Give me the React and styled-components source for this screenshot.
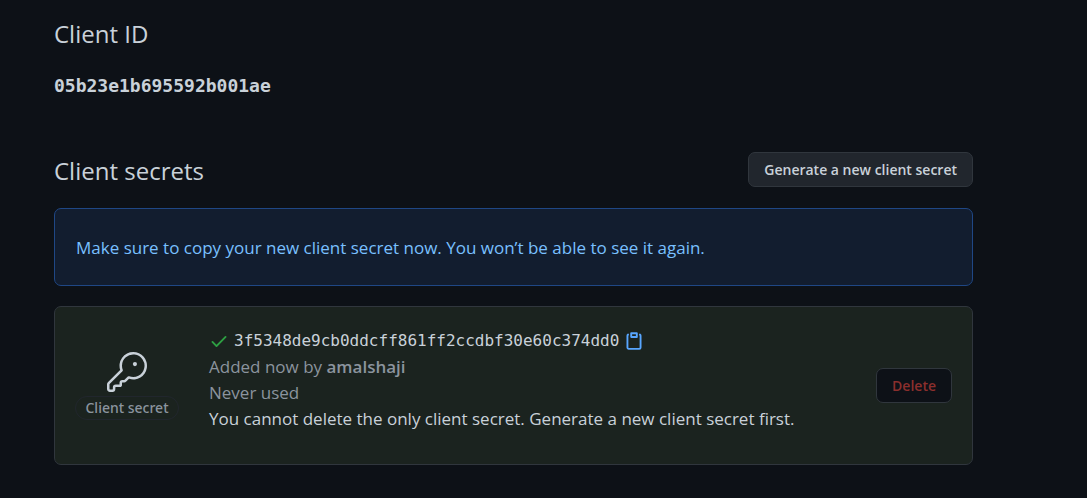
import React from 'react';
import styled, { createGlobalStyle } from 'styled-components';

const sans = '"Open Sans", "Noto Sans", sans-serif';
const label = '"Noto Sans", "Open Sans", sans-serif';
const mono = '"DejaVu Sans Mono", "Liberation Mono", monospace';

const GlobalStyle = createGlobalStyle`
  *, *::before, *::after { box-sizing: border-box; }
  body {
    margin: 0;
    background: #0d1117;
    color: #c9d1d9;
    font-family: ${sans};
    font-size: 17px;
    line-height: 26px;
  }
`;

const Page = styled.main`
  padding: 15px 114px 33px 54px;
`;

const Heading = styled.h2`
  margin: 0;
  font-size: 24px;
  font-weight: 400;
  line-height: 38px;
`;

const ClientId = styled.code`
  display: block;
  margin-top: 20px;
  font-family: ${mono};
  font-size: 18px;
  font-weight: 700;
  line-height: 26px;
`;

const SectionHeader = styled.div`
  display: flex;
  align-items: flex-start;
  justify-content: space-between;
  margin-top: 53px;
`;

const Button = styled.button`
  flex: none;
  height: 35px;
  padding: 0 15px;
  border: 1px solid #30363d;
  border-radius: 7px;
  background: ${(p) => (p.$danger ? '#0d1117' : '#21262d')};
  color: ${(p) => (p.$danger ? '#8b2f2d' : '#c9d1d9')};
  font-family: ${sans};
  font-size: 14px;
  font-weight: 600;
  line-height: 20px;
`;

const Notice = styled.div`
  margin-top: 18px;
  padding: 26px 21px 24px;
  border: 1px solid #1f4785;
  border-radius: 7px;
  background: #121d2f;
  color: #79c0ff;
`;

const SecretCard = styled.section`
  display: flex;
  align-items: center;
  margin-top: 20px;
  padding: 20px;
  min-height: 159px;
  border: 1px solid #30363d;
  border-radius: 7px;
  background: #1b231f;
`;

const KeyColumn = styled.div`
  display: flex;
  flex-direction: column;
  align-items: center;
  flex: none;
  width: 104px;
  margin-right: 30px;
`;

const Tag = styled.span`
  margin-top: 4px;
  padding: 0 9px;
  border: 1px solid #21262d;
  border-radius: 12px;
  color: #8b949e;
  font-family: ${label};
  font-size: 14px;
  font-weight: 500;
  line-height: 22px;
  white-space: nowrap;
`;

const Details = styled.div`
  flex: 1;
  align-self: flex-start;
  min-width: 0;
  padding-top: 1px;
`;

const SecretLine = styled.div`
  display: flex;
  align-items: center;
  gap: 5px;
`;

const SecretValue = styled.code`
  font-family: ${mono};
  font-size: 16px;
`;

const CopyButton = styled.button`
  display: flex;
  padding: 0;
  border: 0;
  background: none;
  color: #58a6ff;
`;

const Line = styled.div`
  color: ${(p) => (p.$muted ? '#8b949e' : '#c9d1d9')};
`;

const Author = styled.a`
  color: inherit;
  font-weight: 600;
  text-decoration: none;
`;

const Icon = styled.svg`
  display: block;
  flex: none;
  fill: currentColor;
`;

const CheckIcon = styled(Icon)`
  color: #2ea043;
`;

export default function App() {
  return (
    <>
      <GlobalStyle />
      <Page>
        <Heading>Client ID</Heading>
        <ClientId>05b23e1b695592b001ae</ClientId>

        <SectionHeader>
          <Heading>Client secrets</Heading>
          <Button type="button">Generate a new client secret</Button>
        </SectionHeader>

        <Notice>
          Make sure to copy your new client secret now. You won’t be able to see it again.
        </Notice>

        <SecretCard>
          <KeyColumn>
            <Icon width="40" height="40" viewBox="0 0 24 24" aria-hidden="true">
              <path d="M16.75 8.5a1.25 1.25 0 100-2.5 1.25 1.25 0 000 2.5z" />
              <path
                fillRule="evenodd"
                d="M15.75 0a8.25 8.25 0 00-7.851 10.79L.513 18.178A1.75 1.75 0 000 19.414v2.836C0 23.217.784 24 1.75 24h1.5A1.75 1.75 0 005 22.25v-1a.25.25 0 01.25-.25h2.735a.75.75 0 00.545-.22l.214-.213A.875.875 0 009 19.948V18.5a.25.25 0 01.25-.25h1.086c.464 0 .91-.184 1.237-.513l1.636-1.636A8.25 8.25 0 1015.75 0zM9 8.25a6.75 6.75 0 114.288 6.287.75.75 0 00-.804.168l-1.971 1.972a.25.25 0 01-.177.073H9.25A1.75 1.75 0 007.5 18.5v1H5.25a1.75 1.75 0 00-1.75 1.75v1a.25.25 0 01-.25.25h-1.5a.25.25 0 01-.25-.25v-2.836a.25.25 0 01.073-.177l7.722-7.721a.75.75 0 00.168-.804A6.73 6.73 0 019 8.25z"
              />
            </Icon>
            <Tag>Client secret</Tag>
          </KeyColumn>

          <Details>
            <SecretLine>
              <CheckIcon width="20" height="20" viewBox="0 0 16 16" aria-hidden="true">
                <path
                  fillRule="evenodd"
                  d="M13.78 4.22a.75.75 0 010 1.06l-7.25 7.25a.75.75 0 01-1.06 0L2.22 9.28a.75.75 0 011.06-1.06L6 10.94l6.72-6.72a.75.75 0 011.06 0z"
                />
              </CheckIcon>
              <SecretValue>3f5348de9cb0ddcff861ff2ccdbf30e60c374dd0</SecretValue>
              <CopyButton type="button" aria-label="Copy client secret">
                <Icon width="20" height="20" viewBox="0 0 16 16" aria-hidden="true">
                  <path
                    fillRule="evenodd"
                    d="M5.75 1a.75.75 0 00-.75.75v3c0 .414.336.75.75.75h4.5a.75.75 0 00.75-.75v-3a.75.75 0 00-.75-.75h-4.5zm.75 3V2.5h3V4h-3zm-2.874-.467a.75.75 0 00-.752-1.298A1.75 1.75 0 002 3.75v9.5c0 .966.784 1.75 1.75 1.75h8.5A1.75 1.75 0 0014 13.25v-9.5a1.75 1.75 0 00-.874-1.515.75.75 0 10-.752 1.298.25.25 0 01.126.217v9.5a.25.25 0 01-.25.25h-8.5a.25.25 0 01-.25-.25v-9.5a.25.25 0 01.126-.217z"
                  />
                </Icon>
              </CopyButton>
            </SecretLine>
            <Line $muted>
              Added now by <Author href="#amalshaji">amalshaji</Author>
            </Line>
            <Line $muted>Never used</Line>
            <Line>
              You cannot delete the only client secret. Generate a new client secret first.
            </Line>
          </Details>

          <Button type="button" $danger>
            Delete
          </Button>
        </SecretCard>
      </Page>
    </>
  );
}
